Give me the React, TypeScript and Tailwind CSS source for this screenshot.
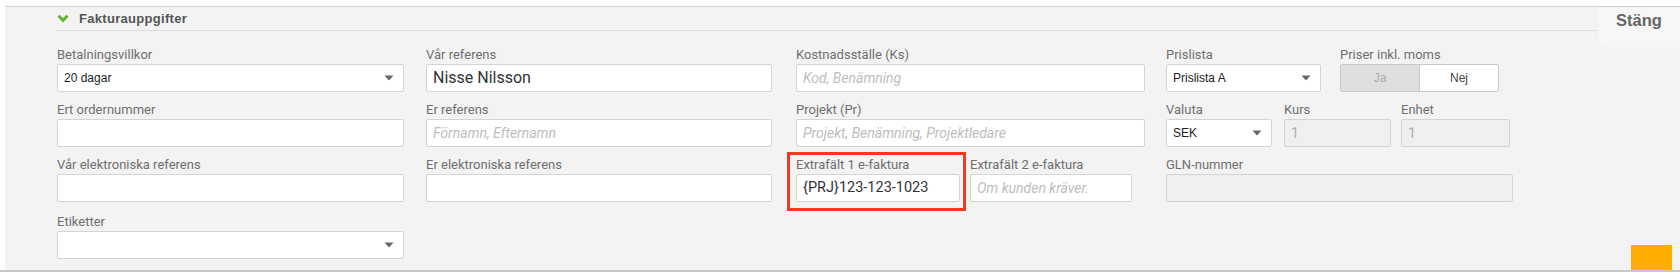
import React from "react";

const labelCls = "block h-[15px] text-[13px] leading-[15px] text-[#6f6f6f] mb-[2px] whitespace-nowrap";
const boxCls = "h-[28px] bg-white border border-[#d4d4d4] rounded-[2px] flex items-center px-[6px]";
const disabledCls = "h-[28px] bg-[#efefef] border border-[#d4d4d4] rounded-[2px] flex items-center px-[6px] text-[14px] text-[#b0b0b0]";

function Caret() {
  return (
    <svg width="10" height="6" viewBox="0 0 10 6" className="shrink-0">
      <path d="M0.5 0.5 H9.5 L5 5.5 Z" fill="#666" />
    </svg>
  );
}

function Field({ label, children, className = "" }: { label: string; children: React.ReactNode; className?: string }) {
  return (
    <div className={className}>
      <span className={labelCls}>{label}</span>
      {children}
    </div>
  );
}

function Select({ value }: { value: string }) {
  return (
    <div className={`${boxCls} justify-between pr-[9px]`}>
      <span className="text-[12px] text-[#222] font-['Liberation_Sans',Arial,sans-serif]">{value}</span>
      <Caret />
    </div>
  );
}

function Input({ value, placeholder }: { value?: string; placeholder?: string }) {
  return (
    <div className={boxCls}>
      {value ? (
        <span className="text-[16px] text-[#333]">{value}</span>
      ) : placeholder ? (
        <span className="text-[14px] italic text-[#bdbdbd]">{placeholder}</span>
      ) : null}
    </div>
  );
}

export default function App() {
  return (
    <div className="w-[1680px] h-[274px] bg-white relative overflow-hidden font-['Roboto',sans-serif]">
      <div className="h-[6px] bg-white" />
      <div className="ml-[5px] h-[264px] border-t border-[#cfcfcf] bg-[#f3f3f3] relative">
        {/* header */}
        <div className="ml-[52px] mr-[83px] h-[24px] border-b border-[#dcdcdc] flex items-center gap-[10px]">
          <svg width="12" height="9" viewBox="0 0 12 9">
            <polyline points="1.5,1.8 6,6.4 10.5,1.8" fill="none" stroke="#62b52d" strokeWidth="3" />
          </svg>
          <span className="text-[13px] font-bold tracking-[0.3px] text-[#555] font-['Liberation_Sans',Arial,sans-serif]">
            Fakturauppgifter
          </span>
        </div>

        <div className="absolute top-0 right-0 w-[81px] h-[40px] bg-[#f7f7f7] rounded-bl-[8px] pl-[17px] pt-[3px]">
          <span className="block leading-[20px] text-[16.5px] font-bold text-[#666] font-['Liberation_Sans',Arial,sans-serif]">
            Stäng
          </span>
        </div>

        {/* form */}
        <div className="flex pl-[52px] mt-[16px]">
          <div className="w-[347px] flex flex-col gap-[10px]">
            <Field label="Betalningsvillkor">
              <Select value="20 dagar" />
            </Field>
            <Field label="Ert ordernummer">
              <Input />
            </Field>
            <Field label="Vår elektroniska referens">
              <Input />
            </Field>
            <Field label="Etiketter" className="mt-[2px]">
              <Select value="" />
            </Field>
          </div>

          <div className="w-[346px] ml-[22px] flex flex-col gap-[10px]">
            <Field label="Vår referens">
              <Input value="Nisse Nilsson" />
            </Field>
            <Field label="Er referens">
              <Input placeholder="Förnamn, Efternamn" />
            </Field>
            <Field label="Er elektroniska referens">
              <Input />
            </Field>
          </div>

          <div className="w-[349px] ml-[24px] flex flex-col gap-[10px]">
            <Field label="Kostnadsställe (Ks)">
              <Input placeholder="Kod, Benämning" />
            </Field>
            <Field label="Projekt (Pr)">
              <Input placeholder="Projekt, Benämning, Projektledare" />
            </Field>
            <div className="flex gap-[10px]">
              <div className="relative w-[164px]">
                <Field label="Extrafält 1 e-faktura">
                  <div className={boxCls}>
                    <span className="text-[14.5px] text-[#333]">{"{PRJ}123-123-1023"}</span>
                  </div>
                </Field>
                <div className="absolute -left-[9px] -right-[6px] -top-[5px] -bottom-[9px] border-[3px] border-[#f4391f]" />
              </div>
              <Field label="Extrafält 2 e-faktura" className="w-[162px]">
                <Input placeholder="Om kunden kräver." />
              </Field>
            </div>
          </div>

          <div className="w-[347px] ml-[21px] flex flex-col gap-[10px]">
            <div className="flex gap-[19px]">
              <Field label="Prislista" className="w-[155px]">
                <Select value="Prislista A" />
              </Field>
              <Field label="Priser inkl. moms" className="w-[159px]">
                <div className="h-[28px] flex border border-[#c8c8c8] rounded-[2px] overflow-hidden text-[12px] font-['Liberation_Sans',Arial,sans-serif]">
                  <div className="flex-1 bg-[#dedede] flex items-center justify-center text-[#aaa]">Ja</div>
                  <div className="flex-1 bg-white flex items-center justify-center text-[#444] border-l border-[#c8c8c8]">Nej</div>
                </div>
              </Field>
            </div>
            <div className="flex">
              <Field label="Valuta" className="w-[106px]">
                <Select value="SEK" />
              </Field>
              <Field label="Kurs" className="w-[107px] ml-[12px]">
                <div className={disabledCls}>1</div>
              </Field>
              <Field label="Enhet" className="w-[109px] ml-[10px]">
                <div className={disabledCls}>1</div>
              </Field>
            </div>
            <Field label="GLN-nummer">
              <div className={disabledCls} />
            </Field>
          </div>
        </div>
      </div>
      <div className="border-t-2 border-[#c9c9c9]" />
      <div className="absolute left-[1631px] top-[245px] w-[41px] h-[25px] bg-[#ffad00]" />
    </div>
  );
}
